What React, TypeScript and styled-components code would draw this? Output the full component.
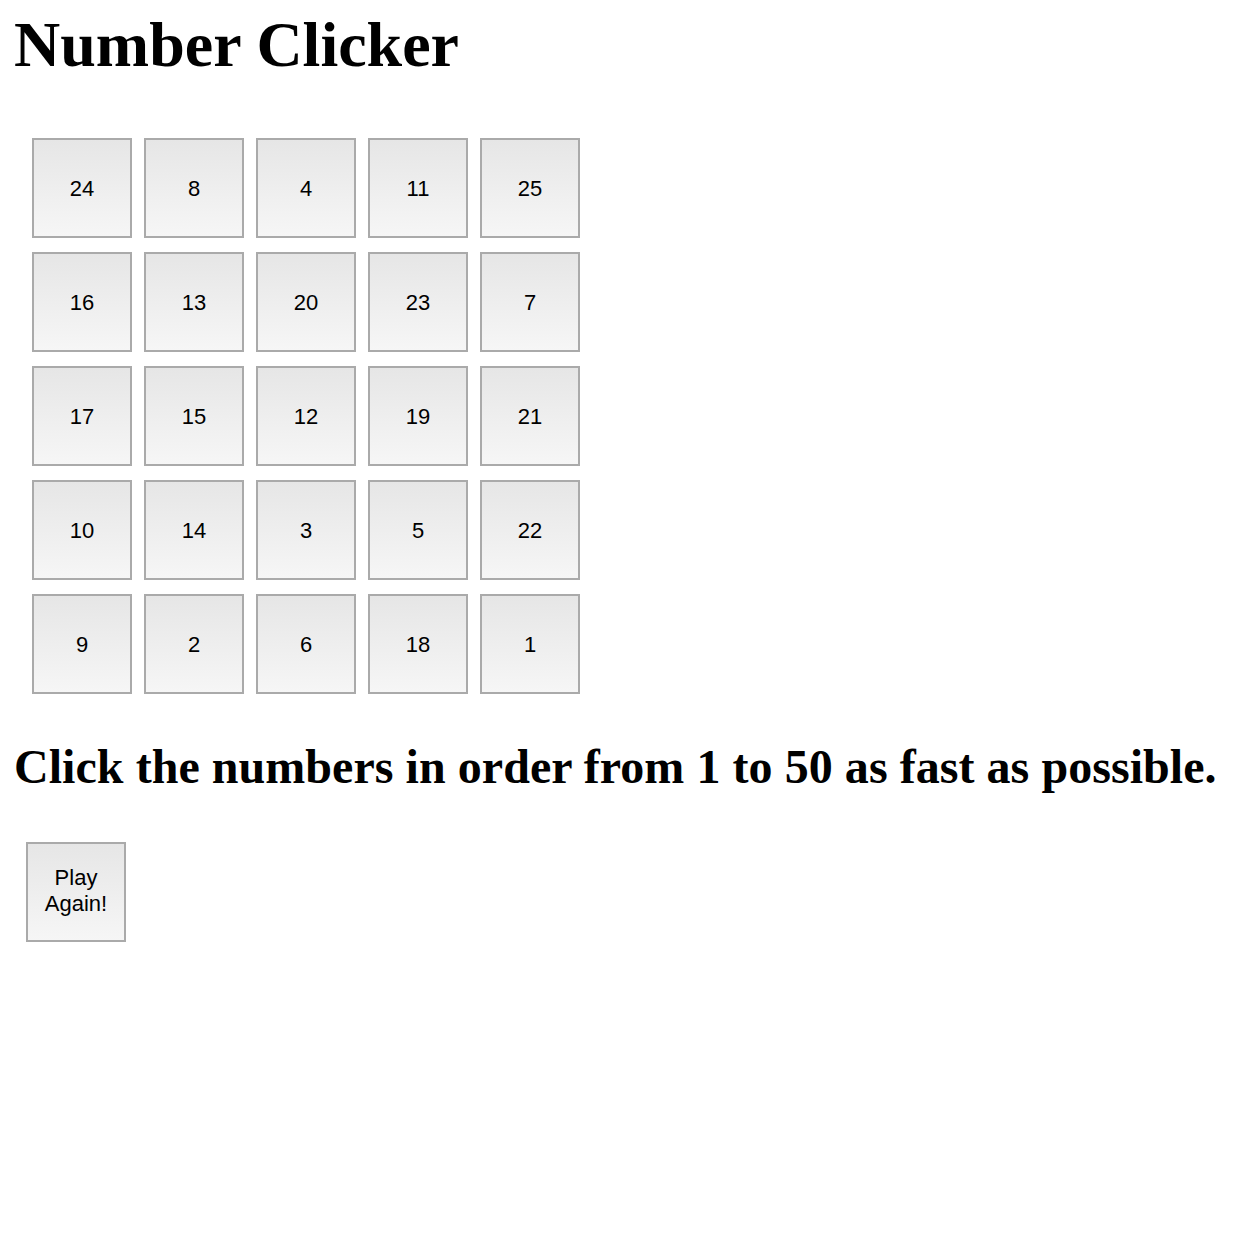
import React from "react";
import styled, { createGlobalStyle } from "styled-components";

const Global = createGlobalStyle`
  html, body { margin: 0; padding: 0; background: #fff; }
  body { font-family: "Liberation Serif", "Times New Roman", serif; color: #000; }
`;

const Page = styled.main`
  padding: 8px 14px 0 14px;
  display: flex;
  flex-direction: column;
  align-items: flex-start;
`;

const Title = styled.h1`
  margin: 0;
  font-size: 64px;
  line-height: 74px;
  font-weight: bold;
`;

const Board = styled.div`
  margin: 56px 0 0 18px;
  display: grid;
  grid-template-columns: repeat(5, 100px);
  grid-auto-rows: 100px;
  column-gap: 12px;
  row-gap: 14px;
`;

const Tile = styled.button`
  box-sizing: border-box;
  width: 100px;
  height: 100px;
  margin: 0;
  padding: 2px 0 0 0;
  border: 2px solid #aaaaaa;
  background: linear-gradient(to bottom, #e6e6e6, #f6f6f6);
  font-family: "Liberation Sans", Arial, sans-serif;
  font-size: 22px;
  line-height: 26px;
  color: #000;
  cursor: pointer;
`;

const Instructions = styled.h2`
  margin: 45px 0 0 0;
  font-size: 48px;
  line-height: 56px;
  font-weight: bold;
  letter-spacing: 0.05px;
`;

const ReplayButton = styled(Tile)`
  margin: 47px 0 0 12px;
  padding: 0 12px 2px 12px;
`;

const numbers = [24, 8, 4, 11, 25, 16, 13, 20, 23, 7, 17, 15, 12, 19, 21, 10, 14, 3, 5, 22, 9, 2, 6, 18, 1];

export default function App() {
  return (
    <>
      <Global />
      <Page>
        <Title>Number Clicker</Title>
        <Board>
          {numbers.map((n) => (
            <Tile key={n}>{n}</Tile>
          ))}
        </Board>
        <Instructions>Click the numbers in order from 1 to 50 as fast as possible.</Instructions>
        <ReplayButton>Play Again!</ReplayButton>
      </Page>
    </>
  );
}
